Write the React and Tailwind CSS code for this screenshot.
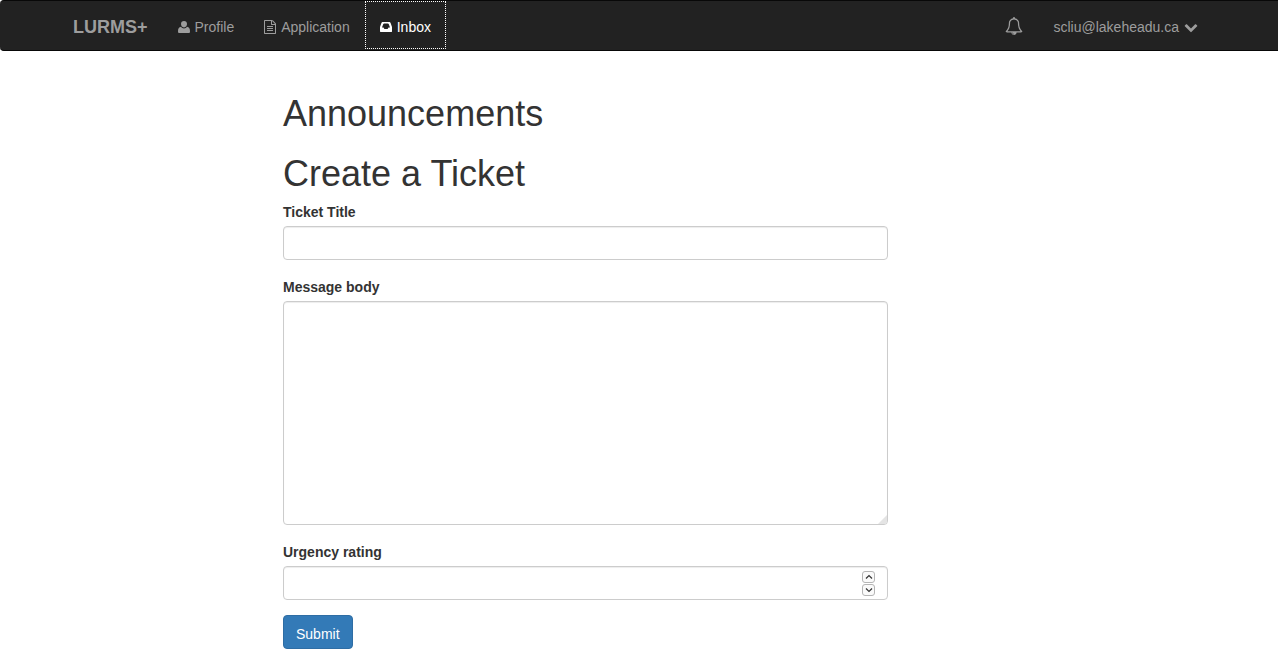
import React from 'react';

const icons = {
  user: {
    box: '0 0 12 14',
    path: 'M6 1C7.9 1 9 2.300 9 4.100C9 5.900 7.800 7.500 6 7.500C4.200 7.500 3 5.900 3 4.100C3 2.300 4.100 1 6 1zM3 6.800C3.800 7.800 4.800 8.400 6 8.400C7.200 8.400 8.200 7.800 9 6.800C11.200 7.200 12 8.700 12 11.500C12 12.500 11.500 13 10.500 13H1.500C0.500 13 0 12.500 0 11.500C0 8.700 0.800 7.200 3 6.800z',
  },
  file: {
    box: '128 0 1536 1792',
    path: 'M1596 380q28 28 48 76t20 88v1152q0 40-28 68t-68 28h-1344q-40 0-68-28t-28-68v-1600q0-40 28-68t68-28h896q40 0 88 20t76 48zm-444-244v376h376q-10-29-22-41l-313-313q-12-12-41-22zm384 1528v-1024h-416q-40 0-68-28t-28-68v-416h-768v1536h1280zm-1024-864q0-14 9-23t23-9h704q14 0 23 9t9 23v64q0 14-9 23t-23 9h-704q-14 0-23-9t-9-23v-64zm736 224q14 0 23 9t9 23v64q0 14-9 23t-23 9h-704q-14 0-23-9t-9-23v-64q0-14 9-23t23-9h704zm0 256q14 0 23 9t9 23v64q0 14-9 23t-23 9h-704q-14 0-23-9t-9-23v-64q0-14 9-23t23-9h704z',
  },
  inbox: {
    box: '0 0 12 14',
    path: 'M3 2H9C9.900 2 10.400 2.400 10.700 3.200L12 7V11.200C12 11.800 11.800 12 11.200 12H0.800C0.200 12 0 11.800 0 11.200V7L1.300 3.200C1.600 2.400 2.100 2 3 2zM3.200 4.200L2 7.500H3.500L4.400 9H7.600L8.500 7.500H10L8.800 4.200C8.600 3.700 8.300 3.500 7.900 3.500H4.100C3.700 3.500 3.400 3.700 3.200 4.200z',
  },
  bell: {
    box: '0 0 1792 1792',
    path: 'M912 1696q0-16-16-16-59 0-101.500-42.500t-42.500-101.500q0-16-16-16t-16 16q0 73 51.500 124.500t124.500 51.500q16 0 16-16zm-666-288h1300q-266-300-266-832 0-51-24-105t-69-103-121.500-80.500-169.500-31.500-169.500 31.500-121.500 80.500-69 103-24 105q0 532-266 832zm1482 0q0 52-38 90t-90 38h-448q0 106-75 181t-181 75-181-75-75-181h-448q-52 0-90-38t-38-90q50-42 91-88t85-119.500 74.500-158.500 50-206 19.500-260q0-152 117-282.500t307-158.500q-8-19-8-39 0-40 28-68t68-28 68 28 28 68q0 20-8 39 190 28 307 158.500t117 282.500q0 139 19.500 260t50 206 74.500 158.500 85 119.500 91 88z',
  },
  chevron: {
    box: '0 0 1792 1792',
    path: 'M1683 808l-742 741q-19 19-45 19t-45-19l-742-741q-19-19-19-45.500t19-45.500l166-165q19-19 45-19t45 19l531 531 531-531q19-19 45-19t45 19l166 165q19 19 19 45.500t-19 45.500z',
  },
};

function Icon({ name, className }) {
  return (
    <svg viewBox={icons[name].box} fill="currentColor" fillRule="evenodd" aria-hidden="true" className={className}>
      <path d={icons[name].path} />
    </svg>
  );
}

const navItem = 'flex items-center gap-[5px] px-[15px] pt-4 pb-3';

const field =
  'block w-full rounded border border-[#ccc] bg-white px-3 text-sm text-[#555] shadow-[inset_0_1px_1px_rgba(0,0,0,0.075)]';

function Step({ label, path }) {
  return (
    <button
      type="button"
      aria-label={label}
      className="flex h-3 w-[13px] items-center justify-center rounded-[3px] border border-[#b5b5b5] bg-[#fafafa] text-[#333]"
    >
      <svg viewBox="0 0 8 8" className="h-2 w-2 shrink-0" fill="none" stroke="currentColor" strokeWidth="1.2">
        <path d={path} />
      </svg>
    </button>
  );
}

export default function App() {
  return (
    <div className="bg-white font-['Liberation_Sans',Arial,sans-serif] text-sm leading-5 text-[#333]">
      <nav className="flex items-start justify-between rounded-l border-y border-[#080808] bg-[#222] pr-[65px] pb-px pl-[58px] text-[#9d9d9d]">
        <div className="flex items-start">
          <a href="#home" className="px-[15px] pt-4 pb-3 text-lg leading-5 font-bold">LURMS+</a>
          <a href="#profile" className={navItem}>
            <Icon name="user" className="h-3.5 w-3" />
            Profile
          </a>
          <a href="#application" className={navItem}>
            <Icon name="file" className="h-3.5 w-3" />
            Application
          </a>
          <a
            href="#inbox"
            aria-current="page"
            className={`${navItem} text-white outline-1 -outline-offset-1 outline-dotted outline-white`}
          >
            <Icon name="inbox" className="h-3.5 w-3" />
            Inbox
          </a>
        </div>
        <div className="flex items-start">
          <button type="button" aria-label="Notifications" className={navItem}>
            <Icon name="bell" className="h-[18px] w-[18px]" />
          </button>
          <a href="#account" className={navItem}>
            scliu@lakeheadu.ca
            <Icon name="chevron" className="h-3.5 w-3.5" />
          </a>
        </div>
      </nav>

      <main className="mr-4 ml-[283px] max-w-[605px] pt-[43px] pb-5">
        <h1 className="text-4xl leading-10 font-normal">Announcements</h1>
        <h1 className="mt-5 mb-2 text-4xl leading-10 font-normal">Create a Ticket</h1>
        <form onSubmit={(e) => e.preventDefault()}>
          <div className="mb-[17px]">
            <label htmlFor="title" className="mb-1 block font-bold">Ticket Title</label>
            <input id="title" type="text" className={`${field} h-[34px]`} />
          </div>
          <div className="mb-[17px]">
            <label htmlFor="body" className="mb-1 block font-bold">Message body</label>
            <div className="relative">
              <textarea id="body" className={`${field} h-56 resize-none`} />
              <svg
                viewBox="0 0 9 9"
                aria-hidden="true"
                className="pointer-events-none absolute right-px bottom-px h-[9px] w-[9px]"
              >
                <path d="M9 0V7L7 9H0z" fill="#e4e4e4" />
              </svg>
            </div>
          </div>
          <div className="mb-[15px]">
            <label htmlFor="urgency" className="mb-1 block font-bold">Urgency rating</label>
            <div className={`${field} flex h-[34px] items-center`}>
              <input id="urgency" type="text" inputMode="numeric" className="min-w-0 flex-1 outline-none" />
              <div className="flex flex-col gap-px">
                <Step label="Increase" path="M1 5.500L4 2.500L7 5.500" />
                <Step label="Decrease" path="M1 2.500L4 5.500L7 2.500" />
              </div>
            </div>
          </div>
          <button
            type="submit"
            className="h-[34px] rounded border border-[#2e6da4] bg-[#337ab7] px-3 pt-1 text-white"
          >
            Submit
          </button>
        </form>
      </main>
    </div>
  );
}
